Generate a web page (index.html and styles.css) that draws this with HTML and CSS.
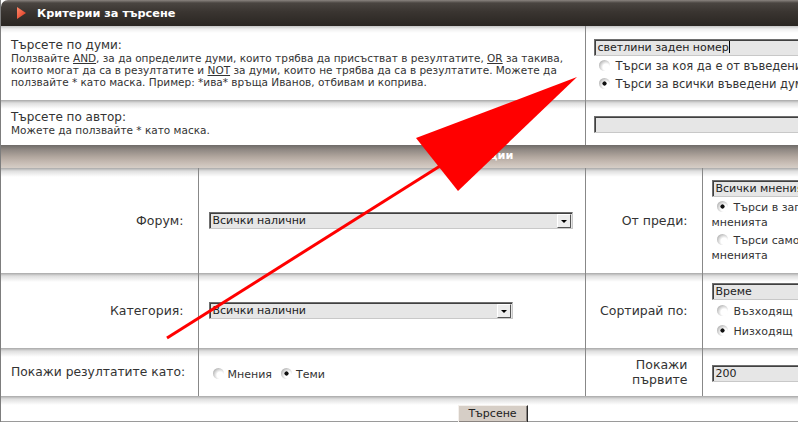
FILE: index.html
```html
<!DOCTYPE html>
<html lang="bg">
<head>
    <meta charset="UTF-8">
    <title>Търсене</title>
    <link rel="stylesheet" href="styles.css">
</head>
<body>
<div class="page">
    <!-- заглавие на формата -->
    <div class="cap">
        <svg class="cap-icon" width="9" height="12" viewBox="0 0 9 12">
            <defs>
                <linearGradient id="tri" x1="0" y1="0" x2="1" y2="1">
                    <stop offset="0" stop-color="#ff8a6a"/>
                    <stop offset="1" stop-color="#d8321c"/>
                </linearGradient>
            </defs>
            <polygon points="0,0 9,6 0,12" fill="url(#tri)"/>
        </svg>
        Критерии за търсене
    </div>

    <table class="grid top">
        <colgroup><col class="c-desc"><col></colgroup>
        <tr class="r-words">
            <td class="desc">
                <div class="ttl">Търсете по думи:</div>
                <div class="hint">Ползвайте <u>AND</u>, за да определите думи, които трябва да присъстват в резултатите, <u>OR</u> за такива, които могат да са в резултатите и <u>NOT</u> за думи, които не трябва да са в резултатите. Можете да ползвайте * като маска. Пример: *ива* връща Иванов, отбивам и коприва.</div>
            </td>
            <td class="field">
                <div class="input wide">светлини заден номер<span class="caret"></span></div>
                <div class="opt"><span class="radio"></span>Търси за коя да е от въведените думи</div>
                <div class="opt"><span class="radio on"></span>Търси за всички въведени думи</div>
            </td>
        </tr>
        <tr class="r-author">
            <td class="desc">
                <div class="ttl">Търсете по автор:</div>
                <div class="hint">Можете да ползвайте * като маска.</div>
            </td>
            <td class="field">
                <div class="input wide"></div>
            </td>
        </tr>
    </table>

    <div class="bar">Опции</div>

    <table class="grid opts">
        <colgroup><col class="c1"><col class="c2"><col class="c3"><col></colgroup>
        <tr class="r-forum">
            <td class="lbl">Форум:</td>
            <td class="fld">
                <div class="select s-forum">Всички налични<span class="drop"></span></div>
            </td>
            <td class="lbl">От преди:</td>
            <td class="fld4">
                <div class="select wide">Всички мнения</div>
                <div class="opt"><span class="radio on"></span>Търси в заглавието и текста на<br>мненията</div>
                <div class="opt"><span class="radio"></span>Търси само в текста на<br>мненията</div>
            </td>
        </tr>
        <tr class="r-cat">
            <td class="lbl">Категория:</td>
            <td class="fld">
                <div class="select s-cat">Всички налични<span class="drop"></span></div>
            </td>
            <td class="lbl">Сортирай по:</td>
            <td class="fld4">
                <div class="select wide">Време</div>
                <div class="opt sort"><span class="radio"></span>Възходящ</div>
                <div class="opt sort"><span class="radio on"></span>Низходящ</div>
            </td>
        </tr>
        <tr class="r-show">
            <td class="lbl left">Покажи резултатите като:</td>
            <td class="fld">
                <span class="inl"><span class="radio"></span>Мнения</span>
                <span class="inl"><span class="radio on"></span>Теми</span>
            </td>
            <td class="lbl">Покажи първите</td>
            <td class="fld4">
                <div class="select wide">200</div>
            </td>
        </tr>
    </table>

    <div class="submit">
        <button class="btn">Търсене</button>
    </div>

    <!-- червената стрелка върху снимката -->
    <svg class="arrow" width="798" height="423" viewBox="0 0 798 423">
        <line x1="440" y1="166" x2="167" y2="338" stroke="#f00" stroke-width="3"/>
        <polygon points="577,77 416,138 458,191" fill="#f00"/>
    </svg>
</div>
</body>
</html>
```

FILE: styles.css
```css
/* основа */
* {
    box-sizing: border-box;
}

body {
    margin: 0;
    background: #fff;
    overflow: hidden;
    font-family: Verdana, 'DejaVu Sans', sans-serif;
    color: #333;
}

.page {
    position: relative;
    width: 984px;
    border-left: 1px solid #7d7d7d;
}

/* тъмната лента отгоре */
.cap {
    height: 26px;
    display: flex;
    align-items: center;
    padding-left: 16px;
    background: linear-gradient(#8a8480 0, #4a4541 3px, #3a3531 45%, #2a2622 100%);
    border-radius: 7px 0 0 0;
    color: #fff;
    font-size: 11.3px;
    font-weight: bold;
}

.cap-icon {
    margin-right: 11px;
}

/* таблици */
.grid {
    width: 100%;
    border-collapse: collapse;
    table-layout: fixed;
}

.grid td {
    padding: 0;
    vertical-align: middle;
    background: linear-gradient(#a8a8a8, #dedede 3px, #fff 9px);
}

.grid td + td {
    border-left: 1px solid #888;
}

.top tr:first-child td {
    background: linear-gradient(#c4c4c4, #efefef 3px, #fff 7px);
}

.c-desc { width: 584px; }
.c1 { width: 197px; }
.c2 { width: 387px; }
.c3 { width: 117px; }

.r-words { height: 74px; }
.r-author { height: 45px; }
.r-forum { height: 105px; }
.r-cat { height: 75px; }
.r-show { height: 48px; }

.grid td.desc {
    padding: 0 4px 0 10px;
}

.ttl {
    font-size: 12px;
    line-height: 14px;
}

.hint {
    font-size: 10.5px;
    line-height: 12px;
}

.grid td.field {
    padding: 4px 8px 0;
}

/* полета */
.input,
.select {
    position: relative;
    height: 17px;
    padding-left: 3px;
    background: #e6e6e6;
    border: 1px solid;
    border-color: #6f6f6f #c8c8c8 #c8c8c8 #6f6f6f;
    box-shadow: inset 1px 1px 0 #404040;
    font-size: 11px;
    line-height: 15px;
    color: #222;
    white-space: nowrap;
}

.wide { width: 300px; }
.s-forum { width: 364px; }
.s-cat { width: 304px; }

.caret {
    display: inline-block;
    width: 1px;
    height: 12px;
    background: #000;
    vertical-align: -2px;
}

.drop {
    position: absolute;
    top: 1px;
    right: 1px;
    width: 14px;
    height: 14px;
    background: #ededed;
    border: 1px solid;
    border-color: #fff #555 #555 #fff;
}

.drop::after {
    content: '';
    position: absolute;
    left: 3px;
    top: 5px;
    border: 3px solid transparent;
    border-top: 3px solid #000;
    border-bottom: 0;
}

/* радио бутони */
.opt {
    font-size: 11px;
    line-height: 15px;
    margin-top: 3px;
}

.field .opt {
    font-size: 11.5px;
    line-height: 16px;
    margin-top: 2px;
}

.sort {
    line-height: 17px;
}

.radio {
    display: inline-block;
    width: 11px;
    height: 11px;
    margin: 0 6px 0 5px;
    border-radius: 50%;
    vertical-align: -1px;
    background: radial-gradient(circle at 66% 66%, #fff 32%, #d4d4d4 58%, #8e8e8e 100%);
}

.radio.on {
    background:
        radial-gradient(circle, #111 0 1.8px, transparent 2.4px),
        radial-gradient(circle at 66% 66%, #fff 32%, #d4d4d4 58%, #8e8e8e 100%);
}

.inl {
    font-size: 11px;
}

.inl .radio {
    margin: 0 4px 0 4px;
}

/* сивата лента "Опции" */
.bar {
    height: 23px;
    background: linear-gradient(#6e6b68 0, #8f8883 20%, #b0a59d 50%, #c6bbb3 75%, #d6cec7 100%);
    color: #fff;
    font-size: 11.3px;
    font-weight: bold;
    line-height: 22px;
    text-align: center;
}

.grid td.lbl {
    font-size: 12.5px;
    text-align: right;
    padding: 0 14px 0 8px;
}

.grid td.left {
    font-size: 12.3px;
    text-align: left;
    white-space: nowrap;
    padding-left: 10px;
}

.grid td.fld {
    padding-left: 10px;
}

.grid td.fld4 {
    padding: 2px 0 0 9px;
}

/* бутон */
.submit {
    height: 26px;
    padding-top: 6px;
    text-align: center;
    background: linear-gradient(#a8a8a8, #dedede 3px, #fff 9px);
    border-bottom: 1px solid #9a9a9a;
}

.btn {
    width: 70px;
    height: 18px;
    padding: 0;
    background: #d6cec6;
    border: 1px solid;
    border-color: #f4f0ec #2a2a2a #2a2a2a #f4f0ec;
    box-shadow: inset -1px -1px 0 #8a8480;
    font-family: inherit;
    font-size: 11px;
    color: #222;
}

/* стрелката е отделен слой отгоре */
.arrow {
    position: absolute;
    top: 0;
    left: -1px;
    pointer-events: none;
}
```
